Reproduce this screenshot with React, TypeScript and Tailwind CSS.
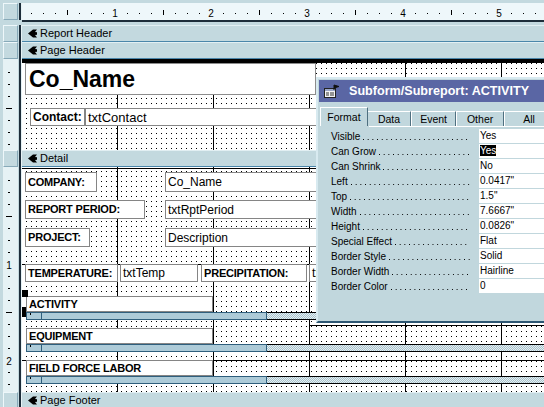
import React from 'react'

const FONT = "font-['Liberation_Sans',Arial,sans-serif]"

// design-surface backgrounds: black dots on white + inch lines
const PH_GRID =
  'bg-black [background-image:linear-gradient(90deg,#000_1px,transparent_1px),linear-gradient(#fff_4px,transparent_4px),linear-gradient(90deg,#fff_4px,transparent_4px)] [background-size:96px_100%,5px_5px,5px_5px] [background-position:95px_0,0_0,0_0]'
const DETAIL_GRID =
  'bg-black [background-image:linear-gradient(90deg,#000_1px,transparent_1px),linear-gradient(#000_1px,transparent_1px),linear-gradient(#fff_4px,transparent_4px),linear-gradient(90deg,#fff_4px,transparent_4px)] [background-size:96px_100%,100%_96px,5px_5px,5px_5px] [background-position:95px_0,0_1px,0_0,0_0]'
const HATCH =
  '[background-image:repeating-conic-gradient(#a9c3cd_0_25%,#e6f0f3_0_50%)] [background-size:2px_2px]'
const LEADER =
  '[background-image:linear-gradient(90deg,#000_1px,transparent_1px)] [background-size:4.7px_1px] bg-repeat-x'

const LABEL =
  'absolute flex items-center bg-white border border-[#858585] pl-[2px] text-[11px] font-bold tracking-[-0.2px] text-black whitespace-nowrap overflow-hidden leading-none'
const TEXTBOX =
  'absolute flex items-center bg-white border border-[#858585] pl-[2px] text-[12px] text-black whitespace-nowrap overflow-hidden leading-none'

function BandIcon() {
  return (
    <svg width="9" height="9" viewBox="0 0 9 9" className="block">
      <path d="M0 4.5 L5 0.5 L9 0.5 L7 3 L9 3.2 L9 5.8 L7 6 L9 8.5 L5 8.5 Z" fill="#000" />
    </svg>
  )
}

function LeftCol({ kind, children }: { kind: 'band' | 'ruler'; children?: React.ReactNode }) {
  return (
    <div className="flex w-[22px] shrink-0">
      <div className="w-[3px]" />
      <div
        className={
          kind === 'ruler'
            ? 'w-[15px] bg-[#e6f2f5] overflow-hidden'
            : 'w-[15px] bg-[#c3d9df] border border-t-[#eef7fa] border-l-[#eef7fa] border-r-[#87a9b8] border-b-[#87a9b8]'
        }
      >
        {children}
      </div>
      <div className="w-[1px]" />
      <div className="w-[2px] bg-[#1d2d3a]" />
      <div className="w-[1px] bg-[#e6f2f5]" />
    </div>
  )
}

function Band({ label }: { label: string }) {
  return (
    <div className="flex h-[17px]">
      <LeftCol kind="band" />
      <div className="flex flex-1 items-center gap-[3px] pl-[6px] bg-[#c3d9df] border-t border-t-[#e2eff3] border-b border-b-[#4a86aa] text-[11px] leading-none text-black">
        <BandIcon />
        <span>{label}</span>
      </div>
    </div>
  )
}

function HRuler() {
  const marks = []
  for (let i = 1; i < 46; i++) {
    const x = -3 + 12 * i
    if (i % 8 === 0)
      marks.push(
        <text key={i} x={x} y={14} fontSize={10} textAnchor="middle" fontFamily="Liberation Sans, Arial, sans-serif" fill="#000">
          {i / 8}
        </text>
      )
    else if (i % 4 === 0) marks.push(<rect key={i} x={x} y={7} width={1} height={5} fill="#000" />)
    else marks.push(<rect key={i} x={x} y={10} width={1} height={1} fill="#000" />)
  }
  return (
    <svg width={522} height={17} className="block">
      {marks}
    </svg>
  )
}

function VRuler({ height, origin }: { height: number; origin: number }) {
  const marks = []
  for (let i = 1; origin + 12 * i < height; i++) {
    const y = origin + 12 * i
    if (i % 8 === 0)
      marks.push(
        <text key={i} x={6} y={y + 5} fontSize={10} textAnchor="middle" fontFamily="Liberation Sans, Arial, sans-serif" fill="#000">
          {i / 8}
        </text>
      )
    else if (i % 4 === 0) marks.push(<rect key={i} x={3} y={y} width={6} height={1} fill="#000" />)
    else marks.push(<rect key={i} x={5} y={y} width={2} height={1} fill="#000" />)
  }
  return (
    <svg width={15} height={height} className="block">
      {marks}
    </svg>
  )
}

function SubBar({ className }: { className: string }) {
  return (
    <div className={`absolute left-[4px] right-0 h-[8px] flex ${className}`}>
      <div className="flex w-[241px] h-full bg-[#adcbd8] border border-[#2f5f7d]">
        <div className="relative w-[15px] border-r border-[#2f5f7d]">
          <div className="absolute left-[3px] top-0 w-[1px] h-[2px] bg-black" />
        </div>
      </div>
      <div className={`flex-1 border-y border-black ${HATCH}`} />
    </div>
  )
}

function SheetIcon() {
  return (
    <svg width="17" height="15" viewBox="0 0 17 15" className="block">
      <rect x="1.5" y="4.5" width="11" height="9" fill="#f4f4f4" stroke="#222" />
      <rect x="2" y="5" width="10" height="2" fill="#9aa6c8" />
      <path d="M3 9h3M7 9h4M3 11h3M7 11h4" stroke="#333" />
      <path d="M11 1 L11 6 M11 1 L16 2.5 L11 4" stroke="#111" fill="#111" />
    </svg>
  )
}

const PROPS: [string, string][] = [
  ['Visible', 'Yes'],
  ['Can Grow', 'Yes'],
  ['Can Shrink', 'No'],
  ['Left', '0.0417"'],
  ['Top', '1.5"'],
  ['Width', '7.6667"'],
  ['Height', '0.0826"'],
  ['Special Effect', 'Flat'],
  ['Border Style', 'Solid'],
  ['Border Width', 'Hairline'],
  ['Border Color', '0'],
]

function PropertySheet() {
  return (
    <div className="absolute left-[316px] top-[77px] w-[240px] h-[246px] flex flex-col bg-[#c1d7dd] border-2 border-t-[#d8eaf0] border-l-[#d8eaf0] border-b-[#2c5672] border-r-[#2c5672] p-[1px]">
      <div className="h-[22px] shrink-0 flex items-center gap-[9px] pl-[4px] bg-[#5a66a4]">
        <SheetIcon />
        <span className="text-white font-bold text-[12.6px] leading-none whitespace-nowrap">Subform/Subreport: ACTIVITY</span>
      </div>
      <div className="h-[24px] shrink-0 flex items-end pl-[1px] text-[10.5px] leading-none text-black">
        <div className="w-[49px] h-[19px] flex items-center justify-center bg-[#c1d7dd] border-l border-t border-l-white border-t-white border-r border-r-[#4f7080]">Format</div>
        <div className="w-[44px] h-[15px] flex items-center justify-center border-t border-t-white border-r border-r-[#4f7080]">Data</div>
        <div className="w-[46px] h-[15px] flex items-center justify-center border-l border-t border-l-white border-t-white border-r border-r-[#4f7080]">Event</div>
        <div className="w-[49px] h-[15px] flex items-center justify-center border-l border-t border-l-white border-t-white border-r border-r-[#4f7080]">Other</div>
        <div className="w-[50px] h-[15px] flex items-center justify-center border-l border-t border-l-white border-t-white">All</div>
      </div>
      <div className="h-[1px] shrink-0 flex">
        <div className="w-[50px]" />
        <div className="flex-1 bg-white" />
      </div>
      <div className="flex flex-col pt-[2px] pl-[12px] text-[10px] text-black">
        {PROPS.map(([name, value], i) => (
          <div key={name} className="flex h-[15px]">
            <div className="w-[148px] pr-[9px] flex items-end">
              <span className="leading-[15px] whitespace-nowrap">{name}</span>
              <div className={`flex-1 ml-[3px] mb-[4px] h-[1px] ${LEADER}`} />
            </div>
            <div className="flex-1 h-[14px] bg-white pl-[1px] leading-[14px] whitespace-nowrap">
              {i === 1 ? <span className="bg-black text-white">Yes</span> : value}
            </div>
          </div>
        ))}
      </div>
    </div>
  )
}

export default function App() {
  return (
    <div className={`relative w-[544px] h-[407px] overflow-hidden bg-[#c3d9df] ${FONT}`}>
      <div className="h-[3px]" />

      {/* horizontal ruler */}
      <div className="flex h-[17px]">
        <LeftCol kind="band" />
        <div className="flex-1 bg-[#eef7fa] overflow-hidden">
          <HRuler />
        </div>
      </div>
      <div className="flex h-[2px]">
        <div className="w-[22px]" />
        <div className="flex-1 bg-[#1d2d3a]" />
      </div>
      <div className="h-[3px]" />

      <Band label="Report Header" />
      <Band label="Page Header" />

      {/* page header section */}
      <div className="flex h-[91px]">
        <LeftCol kind="ruler">
          <VRuler height={91} origin={1} />
        </LeftCol>
        <div className={`relative flex-1 overflow-hidden ${PH_GRID}`}>
          <div className="absolute left-0 right-0 top-0 h-[4px] bg-black" />
          <div className="absolute left-[3px] top-[4px] w-[291px] h-[32px] flex items-center pl-[3px] bg-white border border-[#8c8c8c] text-[23px] font-bold leading-none text-black">
            Co_Name
          </div>
          <div className={`${LABEL} left-[8px] top-[49px] w-[55px] h-[18px] !text-[12px] !tracking-normal`}>Contact:</div>
          <div className={`${TEXTBOX} left-[63px] top-[49px] w-[260px] h-[18px] !text-[13px]`}>txtContact</div>
        </div>
      </div>

      <Band label="Detail" />

      {/* detail section */}
      <div className="flex h-[225px]">
        <LeftCol kind="ruler">
          <VRuler height={225} origin={1} />
        </LeftCol>
        <div className={`relative flex-1 overflow-hidden ${DETAIL_GRID}`}>
          <div className={`${LABEL} left-[3px] top-[5px] w-[72px] h-[20px]`}>COMPANY:</div>
          <div className={`${TEXTBOX} left-[143px] top-[5px] w-[220px] h-[20px]`}>Co_Name</div>

          <div className={`${LABEL} left-[3px] top-[33px] w-[120px] h-[19px]`}>REPORT PERIOD:</div>
          <div className={`${TEXTBOX} left-[143px] top-[33px] w-[220px] h-[19px]`}>txtRptPeriod</div>

          <div className={`${LABEL} left-[3px] top-[61px] w-[65px] h-[19px]`}>PROJECT:</div>
          <div className={`${TEXTBOX} left-[143px] top-[61px] w-[220px] h-[19px]`}>Description</div>

          <div className={`${LABEL} left-[3px] top-[97px] w-[93px] h-[18px]`}>TEMPERATURE:</div>
          <div className={`${TEXTBOX} left-[98px] top-[97px] w-[78px] h-[18px]`}>txtTemp</div>
          <div className={`${LABEL} left-[179px] top-[97px] w-[106px] h-[18px]`}>PRECIPITATION:</div>
          <div className={`${TEXTBOX} left-[287px] top-[97px] w-[100px] h-[18px]`}>txtPrecip</div>

          <div className={`${LABEL} left-[4px] top-[129px] w-[187px] h-[16px]`}>ACTIVITY</div>
          <SubBar className="top-[145px]" />
          <div className="absolute left-0 top-[123px] w-[6px] h-[7px] bg-black" />
          <div className="absolute left-0 top-[140px] w-[4px] h-[10px] bg-black" />

          <div className="absolute left-[287px] right-0 top-[158px] h-px bg-black" />

          <div className={`${LABEL} left-[4px] top-[161px] w-[187px] h-[16px]`}>EQUIPMENT</div>
          <SubBar className="top-[177px]" />

          <div className={`${LABEL} left-[4px] top-[193px] w-[187px] h-[16px]`}>FIELD FORCE LABOR</div>
          <SubBar className="top-[209px]" />
        </div>
      </div>

      <Band label="Page Footer" />

      <PropertySheet />
    </div>
  )
}
